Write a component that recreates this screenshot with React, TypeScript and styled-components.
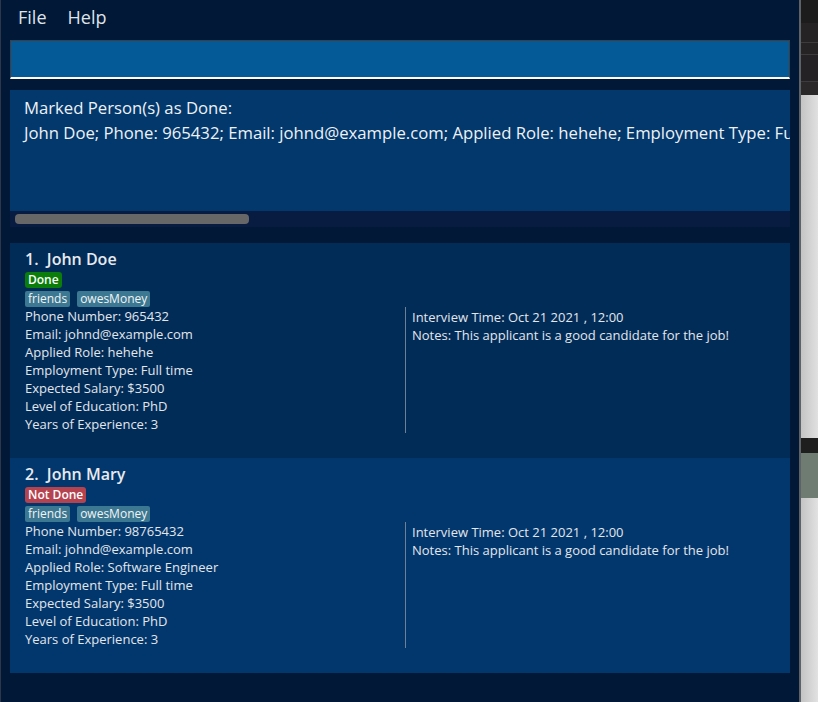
import React from 'react';
import styled, { createGlobalStyle } from 'styled-components';

const GlobalStyle = createGlobalStyle`
  html, body {
    margin: 0;
    padding: 0;
    background: #1d1d1d;
  }
  body {
    font-family: 'Open Sans', 'Noto Sans', sans-serif;
  }
`;

// Whole screen: app window on the left, a sliver of the desktop on the right
const Page = styled.div`
  display: flex;
  width: 818px;
  height: 702px;
  overflow: hidden;
`;

const AppWindow = styled.div`
  width: 801px;
  height: 702px;
  box-sizing: border-box;
  flex-shrink: 0;
  display: flex;
  flex-direction: column;
  background: #011836;
  border-left: 1px solid #2e3749;
  border-right: 2px solid #5e6166;
`;

const MenuBar = styled.div`
  height: 36px;
  display: flex;
  align-items: center;
  gap: 21px;
  padding-left: 17px;
  padding-bottom: 2px;
  box-sizing: border-box;
`;

const MenuItem = styled.span`
  font-size: 18px;
  color: #dfe3ea;
`;

const CommandBox = styled.div`
  margin: 4px 9px 0;
  height: 39px;
  box-sizing: border-box;
  background: #035a96;
  border: 1px solid #3d3f44;
  border-bottom: 2px solid #ffffff;
`;

const ResultDisplay = styled.div`
  margin: 11px 9px 0;
  height: 137px;
  display: flex;
  flex-direction: column;
  background: #071c40;
`;

const ResultText = styled.div`
  height: 122px;
  box-sizing: border-box;
  padding: 5px 0 0 14px;
  background: #02386c;
  color: #eef1f5;
  font-size: 16.7px;
  line-height: 25px;
  white-space: nowrap;
  overflow: hidden;
`;

const ScrollTrack = styled.div`
  flex: 1;
  padding: 3px 5px;
  box-sizing: border-box;
`;

const ScrollThumb = styled.div`
  width: 234px;
  height: 10px;
  border-radius: 4px;
  background: #676767;
`;

const PersonList = styled.div`
  margin: 16px 9px 0;
  display: flex;
  flex-direction: column;
`;

const Card = styled.div<{ $odd: boolean }>`
  background: ${(p) => (p.$odd ? '#02376d' : '#012c58')};
  padding: 5px 5px 25px 15px;
  color: #e3e6eb;
  display: flex;
  flex-direction: column;
  align-items: flex-start;
`;

const Name = styled.div`
  font-size: 16px;
  font-weight: 600;
  line-height: 22px;
  color: #e8eaee;
  white-space: pre;
`;

const StatusBadge = styled.div<{ $done: boolean }>`
  margin-top: 2px;
  height: 16px;
  line-height: 16px;
  padding: 0 3px;
  border-radius: 3px;
  font-size: 12px;
  font-weight: 600;
  color: #ffffff;
  background: ${(p) => (p.$done ? '#0a7d0a' : '#b5424f')};
`;

const TagRow = styled.div`
  display: flex;
  gap: 7px;
  margin-top: 3px;
`;

const Tag = styled.span`
  height: 16px;
  line-height: 16px;
  padding: 0 3px;
  border-radius: 2px;
  font-size: 12px;
  color: #f2f4f6;
  background: #3c7891;
`;

const Details = styled.div`
  align-self: stretch;
  display: grid;
  grid-template-columns: 1fr 1fr;
`;

const Column = styled.div<{ $divider?: boolean }>`
  display: flex;
  flex-direction: column;
  ${(p) => p.$divider && 'border-left: 1px solid #6e7f96; padding: 1px 0 0 6px;'}
`;

const Field = styled.div`
  font-size: 13px;
  line-height: 18px;
  white-space: nowrap;
`;

// Strip of desktop visible to the right of the window
const Desktop = styled.div`
  flex: 1;
  display: flex;
  flex-direction: column;
`;

const DesktopBand = styled.div<{ $h: number; $bg: string; $line?: boolean }>`
  height: ${(p) => p.$h}px;
  background: ${(p) => p.$bg};
  ${(p) => p.$line && 'border-top: 1px solid #3d3b3c;'}
  box-sizing: border-box;
`;

const DesktopFill = styled.div`
  flex: 1;
  background: linear-gradient(90deg, #c4c4c4, #e2e2e2);
`;

type Person = {
  name: string;
  done: boolean;
  tags: string[];
  phone: string;
  role: string;
};

const people: Person[] = [
  { name: 'John Doe', done: true, tags: ['friends', 'owesMoney'], phone: '965432', role: 'hehehe' },
  { name: 'John Mary', done: false, tags: ['friends', 'owesMoney'], phone: '98765432', role: 'Software Engineer' },
];

const PersonCard: React.FC<{ person: Person; index: number }> = ({ person, index }) => (
  <Card $odd={index % 2 === 1}>
    <Name>{`${index + 1}.  ${person.name}`}</Name>
    <StatusBadge $done={person.done}>{person.done ? 'Done' : 'Not Done'}</StatusBadge>
    <TagRow>
      {person.tags.map((t) => (
        <Tag key={t}>{t}</Tag>
      ))}
    </TagRow>
    <Details>
      <Column>
        <Field>Phone Number: {person.phone}</Field>
        <Field>Email: johnd@example.com</Field>
        <Field>Applied Role: {person.role}</Field>
        <Field>Employment Type: Full time</Field>
        <Field>Expected Salary: $3500</Field>
        <Field>Level of Education: PhD</Field>
        <Field>Years of Experience: 3</Field>
      </Column>
      <Column $divider>
        <Field>Interview Time: Oct 21 2021 , 12:00</Field>
        <Field>Notes: This applicant is a good candidate for the job!</Field>
      </Column>
    </Details>
  </Card>
);

const App: React.FC = () => (
  <>
    <GlobalStyle />
    <Page>
      <AppWindow>
        <MenuBar>
          <MenuItem>File</MenuItem>
          <MenuItem>Help</MenuItem>
        </MenuBar>
        <CommandBox />
        <ResultDisplay>
          <ResultText>
            Marked Person(s) as Done:
            <br />
            John Doe; Phone: 965432; Email: johnd@example.com; Applied Role: hehehe; Employment Type: Full time
          </ResultText>
          <ScrollTrack>
            <ScrollThumb />
          </ScrollTrack>
        </ResultDisplay>
        <PersonList>
          {people.map((p, i) => (
            <PersonCard key={p.name} person={p} index={i} />
          ))}
        </PersonList>
      </AppWindow>
      <Desktop>
        <DesktopBand $h={23} $bg="#1c1c1c" />
        <DesktopBand $h={19} $bg="#252324" />
        <DesktopBand $h={12} $bg="#252324" $line />
        <DesktopBand $h={27} $bg="#242224" $line />
        <DesktopBand $h={14} $bg="#2a2828" $line />
        <DesktopBand $h={343} $bg="linear-gradient(90deg, #c4c4c4, #e0e0e0)" />
        <DesktopBand $h={15} $bg="#1e1e1e" />
        <DesktopBand $h={45} $bg="#6f7c71" />
        <DesktopFill />
      </Desktop>
    </Page>
  </>
);

export default App;
